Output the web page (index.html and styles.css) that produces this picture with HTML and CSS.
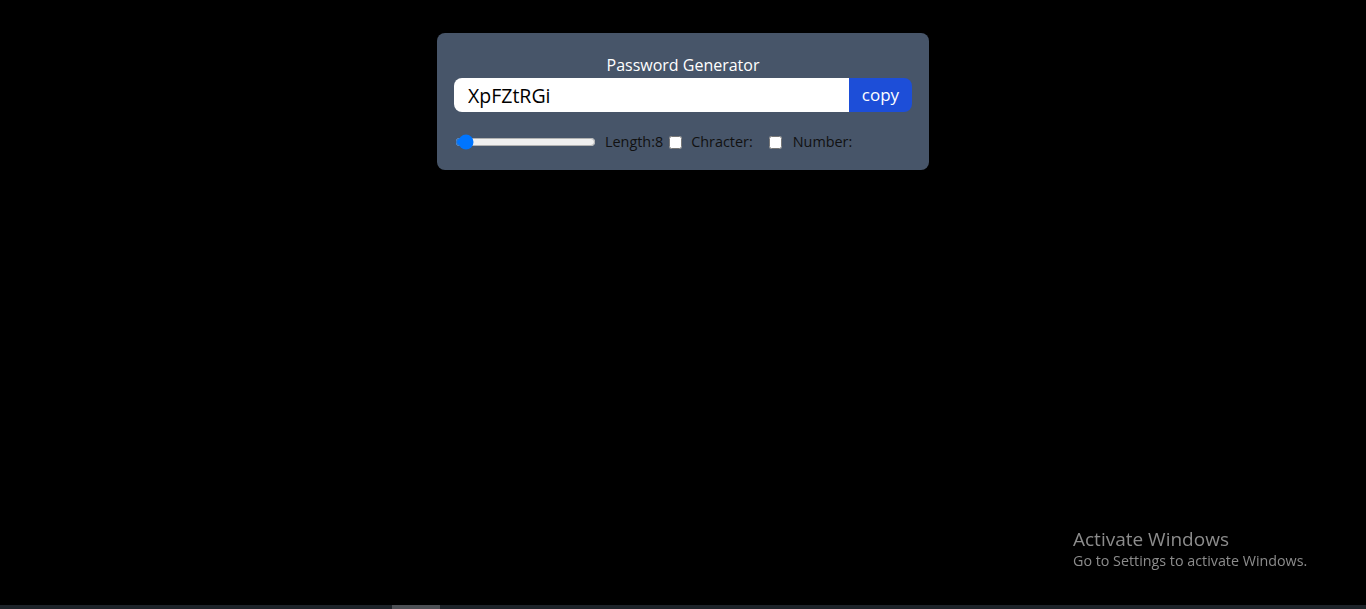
FILE: index.html
```html
<!DOCTYPE html>
<html>
<head>
<meta charset="utf-8">
<link rel="stylesheet" href="styles.css">
</head>
<body>
<div class="card">
  <h1 class="title">Password Generator</h1>
  <div class="field">
    <input class="pwd" type="text" value="XpFZtRGi" readonly>
    <button class="copy">copy</button>
  </div>
  <div class="controls">
    <div class="group">
      <input class="range" type="range" min="6" max="100" value="8">
      <label class="lbl">Length:8</label>
    </div>
    <div class="group">
      <input class="check" type="checkbox" id="ch">
      <label class="lbl" for="ch">Chracter:</label>
    </div>
    <div class="group">
      <input class="check" type="checkbox" id="nu">
      <label class="lbl" for="nu">Number:</label>
    </div>
  </div>
</div>
<div class="watermark">
  <div class="wm-title">Activate Windows</div>
  <div class="wm-sub">Go to Settings to activate Windows.</div>
</div>
<div class="scrollbar"><div class="thumb"></div></div>
</body>
</html>
```
FILE: styles.css
```css
html, body {
  margin: 0;
  padding: 0;
  background: #000;
  height: 100%;
  overflow: hidden;
  font-family: "Open Sans", "Noto Sans", sans-serif;
}
.card {
  width: 492px;
  box-sizing: border-box;
  margin: 33px auto 0;
  background: #475569;
  border-radius: 8px;
  padding: 21px 17px 18px;
}
.title {
  margin: 0;
  text-align: center;
  color: #fff;
  font-size: 16px;
  font-weight: 400;
  line-height: 22px;
}
.field {
  display: flex;
  height: 34px;
  margin-top: 2px;
  border-radius: 8px;
  overflow: hidden;
}
.pwd {
  flex: 1;
  border: 0;
  outline: none;
  padding: 0 14px;
  font-family: inherit;
  font-size: 19.5px;
  color: #000;
  background: #fff;
}
.copy {
  width: 63px;
  border: 0;
  background: #1d4ed8;
  color: #fff;
  font-family: inherit;
  font-size: 17px;
  padding: 0 0 2px;
}
.controls {
  display: flex;
  align-items: center;
  margin-top: 20px;
  font-size: 14.4px;
  color: #111;
}
.group {
  display: flex;
  align-items: center;
}
.range {
  width: 141px;
  margin: 0 9px 0 1px;
}
.check {
  margin: 0 9px 0 6px;
  width: 13px;
  height: 13px;
}
.group:last-child .check {
  margin-left: 16px;
  margin-right: 11px;
}
.lbl {
  line-height: 20px;
}
.watermark {
  position: fixed;
  left: 1073px;
  top: 527px;
  color: #8c8c8c;
}
.wm-title {
  font-size: 19px;
  line-height: 24px;
}
.wm-sub {
  font-size: 14.3px;
  line-height: 20px;
}
.scrollbar {
  position: fixed;
  left: 0;
  right: 0;
  bottom: 0;
  height: 4px;
  background: #1d2329;
}
.thumb {
  margin-left: 392px;
  width: 48px;
  height: 4px;
  background: #4d5055;
}
```
